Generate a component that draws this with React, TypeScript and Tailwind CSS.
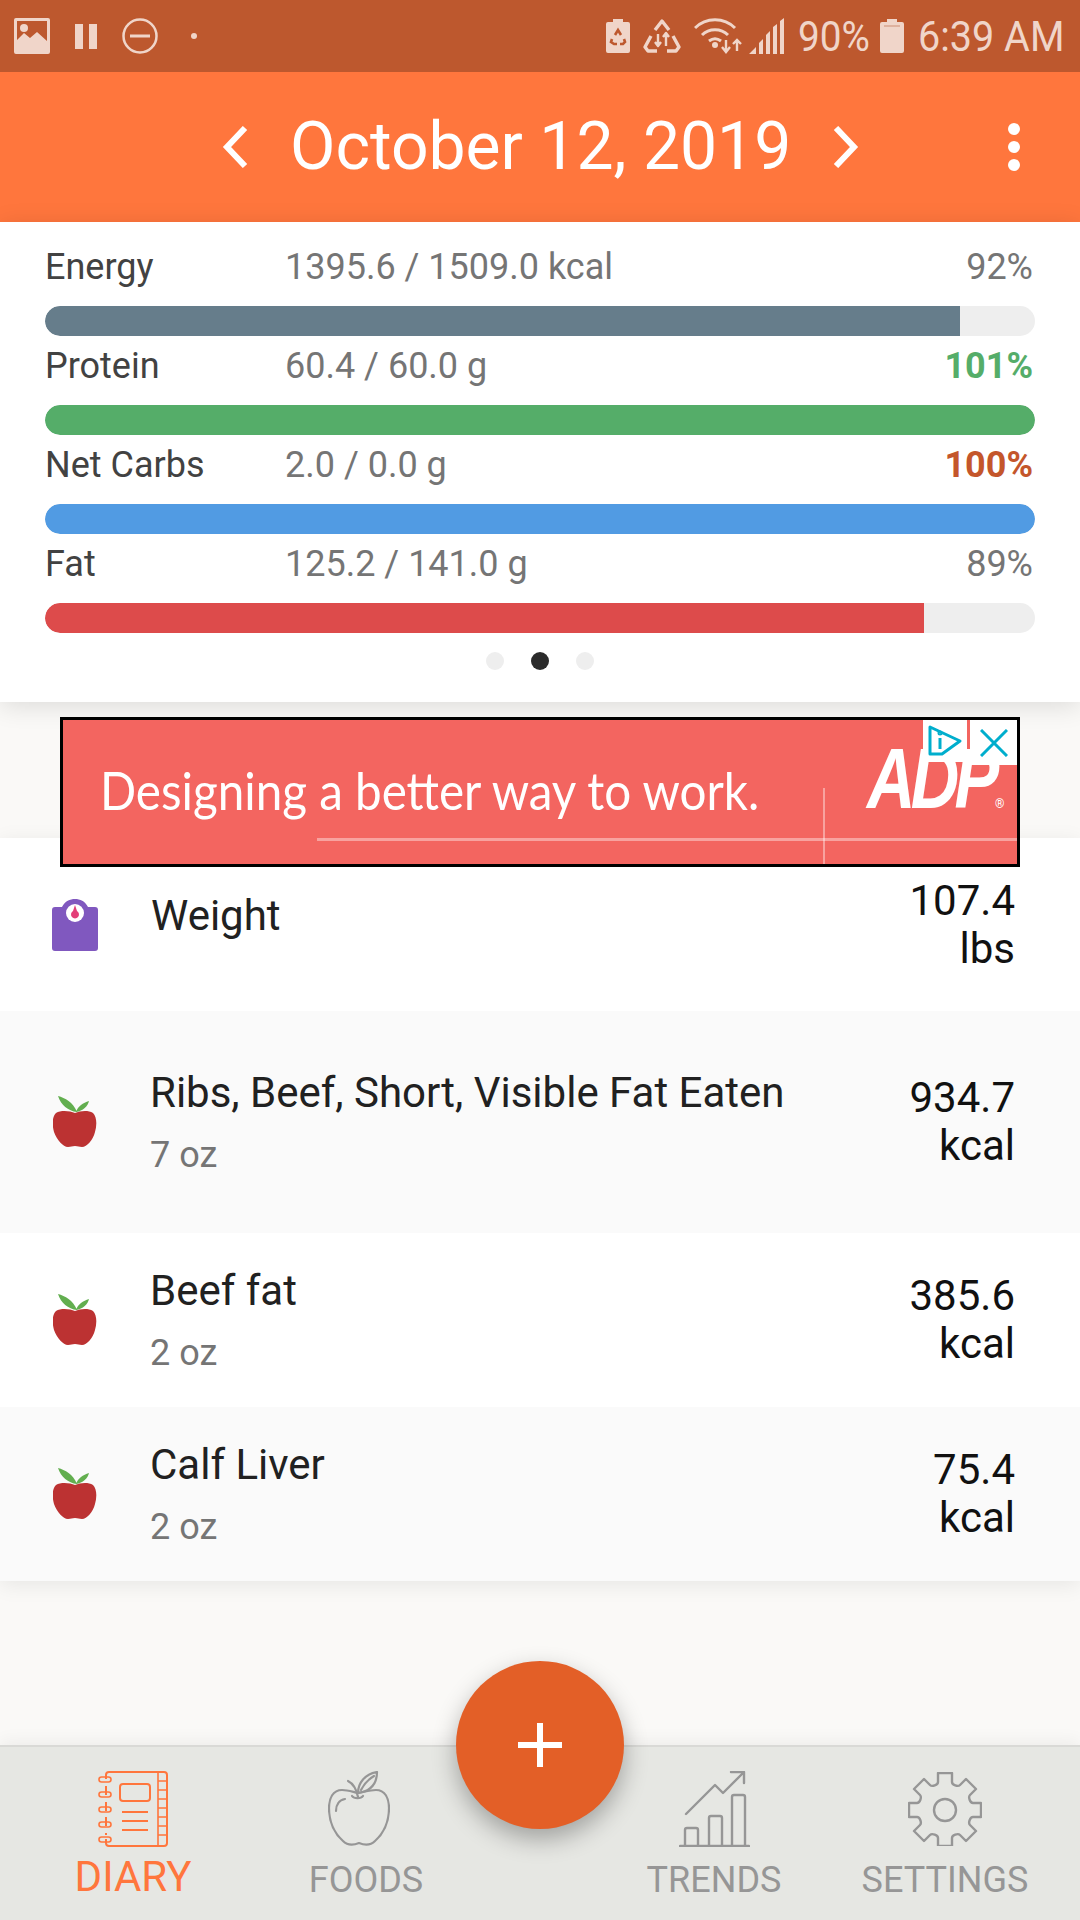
const macros = [
  { name: 'Energy', value: '1395.6 / 1509.0 kcal', pct: '92%', pctClass: 'text-[#757575]', fill: 'bg-[#667d8b] rounded-l-full', width: '92.4%' },
  { name: 'Protein', value: '60.4 / 60.0 g', pct: '101%', pctClass: 'text-[#55ad69] font-bold', fill: 'bg-[#55ad69] rounded-full', width: '100%' },
  { name: 'Net Carbs', value: '2.0 / 0.0 g', pct: '100%', pctClass: 'text-[#c4562b] font-bold', fill: 'bg-[#519be3] rounded-full', width: '100%' },
  { name: 'Fat', value: '125.2 / 141.0 g', pct: '89%', pctClass: 'text-[#757575]', fill: 'bg-[#dd4b4b] rounded-l-full', width: '88.8%' },
]

const foods = [
  { name: 'Ribs, Beef, Short, Visible Fat Eaten', amount: '7 oz', value: '934.7', rowClass: 'h-[222px] bg-[#fafafa]' },
  { name: 'Beef fat', amount: '2 oz', value: '385.6', rowClass: 'h-[174px] bg-white' },
  { name: 'Calf Liver', amount: '2 oz', value: '75.4', rowClass: 'h-[174px] bg-[#fafafa]' },
]

function StatusLeft() {
  return (
    <div className="flex items-center text-[#f0d5c9]">
      <svg width="36" height="36" viewBox="0 0 36 36" className="ml-[14px]">
        <path fill="currentColor" fillRule="evenodd" d="M2 0h32a2 2 0 0 1 2 2v32a2 2 0 0 1-2 2H2a2 2 0 0 1-2-2V2a2 2 0 0 1 2-2Zm1 3v19l7-7 6 5 7-6 10 9V3Z" />
        <circle cx="10" cy="10" r="4" fill="currentColor" />
      </svg>
      <div className="ml-[25px] flex h-[25px] gap-[6px]">
        <div className="w-[8px] bg-current" />
        <div className="w-[8px] bg-current" />
      </div>
      <svg width="36" height="36" viewBox="0 0 36 36" className="ml-[25px]" fill="none" stroke="currentColor" strokeWidth="2.5">
        <circle cx="18" cy="18" r="16.5" />
        <path d="M8 18h20" strokeWidth="3" />
      </svg>
      <div className="ml-[33px] h-[6px] w-[6px] rounded-full bg-current" />
    </div>
  )
}

function StatusRight() {
  return (
    <div className="flex items-center text-[#f0d5c9]">
      <svg width="24" height="34" viewBox="0 0 24 34">
        <path fill="currentColor" d="M7 0h10v3h5a2 2 0 0 1 2 2v27a2 2 0 0 1-2 2H2a2 2 0 0 1-2-2V5a2 2 0 0 1 2-2h5Z" />
        <path fill="none" stroke="#bd582e" strokeWidth="2.6" d="M9 16l3-5 3 5M6 20l-1 3 3 2h3M18 20l1 3-2 2h-3" />
      </svg>
      <svg width="38" height="34" viewBox="0 0 38 34" className="ml-[13px]" fill="none" stroke="currentColor" strokeWidth="3.4" strokeLinejoin="round">
        <path d="M12 11l7-9 7 9M8 17l-6 11 3 4h9M30 17l6 11-3 4h-9" />
        <path d="M15 15v12M12 23l3 4 3-4M23 27V14M20 18l3-4 3 4" strokeWidth="2.4" />
      </svg>
      <svg width="48" height="36" viewBox="0 0 48 36" className="ml-[13px]" fill="none" stroke="currentColor" strokeWidth="3">
        <path d="M1 10C12 -1 30 -1 41 10M8 17c7-7 19-7 26 0M15 23c4-3 8-3 12 0" />
        <circle cx="21" cy="27" r="3" fill="currentColor" stroke="none" />
        <path d="M32 22v11M28 29l4 5 4-5M43 33V22M39 26l4-4 4 4" strokeWidth="2.4" />
      </svg>
      <svg width="35" height="36" viewBox="0 0 35 36" className="ml-[7px]" fill="currentColor">
        <path d="M0 36l7-7v7ZM10 25l4-4v15h-4ZM17 17l4-4v23h-4ZM24 9l4-3v30h-4ZM31 3l4-3v36h-4Z" />
      </svg>
      <span className="ml-[14px] inline-block w-[69px] origin-left scale-x-[0.9] text-[43px] leading-[36px] whitespace-nowrap">90%</span>
      <svg width="24" height="34" viewBox="0 0 24 34" className="ml-[13px]">
        <path fill="currentColor" d="M7 0h10v3h5a2 2 0 0 1 2 2v27a2 2 0 0 1-2 2H2a2 2 0 0 1-2-2V5a2 2 0 0 1 2-2h5Z" />
        <path stroke="#d9a58f" strokeWidth="1.5" d="M4 7h16" />
      </svg>
      <span className="ml-[14px] mr-[19px] inline-block w-[143px] origin-left scale-x-[0.92] text-[43px] leading-[36px] whitespace-nowrap">6:39 AM</span>
    </div>
  )
}

function AppleSolid() {
  return (
    <svg width="44" height="52" viewBox="0 0 44 52">
      <path fill="#bc3232" d="M22 17c5-2 13-3 18 0 4 4 4 12 2 19-2 8-8 15-13 15-3 0-4-1-7-1s-4 1-7 1c-5 0-11-7-14-15C-1 29-1 21 3 17c5-3 14-2 19 0Z" />
      <path fill="#62ae4f" d="M5 0c7 2 15 6 19 16C15 15 8 9 5 0ZM36 5c-1 5-6 10-13 11 2-6 7-9 13-11Z" />
    </svg>
  )
}

function WeightIcon() {
  return (
    <svg width="46" height="52" viewBox="0 0 46 52">
      <path fill="#8058bf" d="M10 8C13 2 18 0 23 0s10 2 13 8h7a3 3 0 0 1 3 3v38a3 3 0 0 1-3 3H3a3 3 0 0 1-3-3V11a3 3 0 0 1 3-3Z" />
      <circle cx="23" cy="14" r="9" fill="#fff" />
      <path fill="#e33f78" d="M23 6l2 6a4 4 0 1 1-4 0Z" />
    </svg>
  )
}

function DiaryIcon() {
  return (
    <svg width="71" height="76" viewBox="0 0 71 76" fill="none" stroke="#ff763d" strokeWidth="1.6">
      <path d="M8 8V4a3 3 0 0 1 3-3h55a3 3 0 0 1 3 3v68a3 3 0 0 1-3 3H11a3 3 0 0 1-3-3v-4M8 15v9M8 31v9M8 46v9M8 62v2" strokeWidth="2" />
      <path d="M60 1v74M60 10h9M60 19h9M60 28h9M60 37h9M60 46h9M60 55h9M60 64h9" />
      <rect x="1" y="6" width="12" height="5" rx="2.5" />
      <rect x="1" y="21" width="12" height="5" rx="2.5" />
      <rect x="1" y="36" width="12" height="5" rx="2.5" />
      <rect x="1" y="51" width="12" height="5" rx="2.5" />
      <rect x="1" y="66" width="12" height="5" rx="2.5" />
      <rect x="22" y="13" width="30" height="17" rx="3" strokeWidth="2" />
      <path d="M24 41h26M24 50h26M24 59h26" strokeWidth="2" />
    </svg>
  )
}

function AppleIcon() {
  return (
    <svg width="62" height="76" viewBox="0 0 62 76" fill="none" stroke="#969696" strokeWidth="2.2" strokeLinecap="round" strokeLinejoin="round">
      <path d="M30 22c6-1 12-3 18-3 9 0 13 8 13 18 0 11-4 24-14 33-5 5-11 4-16 2-5 2-11 3-16-2C5 61 1 48 1 37c0-10 4-18 13-18 6 0 11 2 16 3Z" />
      <path d="M8 40c0-6 3-11 9-12M20 10c4 2 8 6 10 16M24 25c2 3 9 3 11 0" />
      <path d="M30 22c0-10 7-19 19-21 0 11-6 19-19 21ZM33 19c3-6 8-11 13-14" />
    </svg>
  )
}

function TrendsIcon() {
  return (
    <svg width="71" height="76" viewBox="0 0 71 76" fill="none" stroke="#969696" strokeWidth="2.4" strokeLinecap="round" strokeLinejoin="round">
      <path d="M1 75h69M6 75V59a2 2 0 0 1 2-2h9a2 2 0 0 1 2 2v16M30 75V47a2 2 0 0 1 2-2h9a2 2 0 0 1 2 2v28M53 75V26a2 2 0 0 1 2-2h9a2 2 0 0 1 2 2v49" />
      <path d="M7 43L36 14l8 8L64 2M52 1h13v11" />
    </svg>
  )
}

function SettingsIcon() {
  return (
    <svg width="74" height="74" viewBox="0 0 74 74" fill="none" stroke="#969696" strokeWidth="2.4" strokeLinejoin="round">
      <path d="M30 1h14v9c0 3 6 5 8 3l6-6 10 10-6 6c-2 2 0 8 3 8h8v14h-8c-3 0-5 6-3 8l6 6-10 10-6-6c-2-2-8 0-8 3v8H30v-8c0-3-6-5-8-3l-6 6L6 59l6-6c2-2 0-8-3-8H1V31h8c3 0 5-6 3-8l-6-6L16 7l6 6c2 2 8 0 8-3Z" />
      <circle cx="37" cy="38" r="11" />
    </svg>
  )
}

const navItems = [
  { label: 'DIARY', icon: <DiaryIcon />, boxClass: 'w-[266px]', iconClass: '', textClass: 'mt-[9px] text-[42px] leading-[42px] text-[#ff763d]' },
  { label: 'FOODS', icon: <AppleIcon />, boxClass: 'w-[200px]', iconClass: 'mr-[14px]', textClass: 'mt-[14px] text-[36px] leading-[38px] text-[#969696]' },
  { label: 'TRENDS', icon: <TrendsIcon />, boxClass: 'ml-[140px] w-[216px]', iconClass: '', textClass: 'mt-[14px] text-[36px] leading-[38px] text-[#969696]' },
  { label: 'SETTINGS', icon: <SettingsIcon />, boxClass: 'w-[246px]', iconClass: '', textClass: 'mt-[14px] text-[36px] leading-[38px] text-[#969696]' },
]

export default function App() {
  return (
    <div className="relative flex h-[1920px] w-[1080px] flex-col overflow-hidden bg-[#faf9f7] font-[Roboto,sans-serif]">
      <div className="flex h-[72px] shrink-0 items-center justify-between bg-[#bd582e]">
        <StatusLeft />
        <StatusRight />
      </div>

      <div className="flex h-[150px] shrink-0 items-center bg-[#ff763d] pl-[222px] text-white">
        <svg width="26" height="42" viewBox="0 0 26 42" fill="none" stroke="currentColor" strokeWidth="6">
          <path d="M23 2L5 21l18 19" />
        </svg>
        <span className="ml-[42px] w-[499px] text-[66px] leading-none whitespace-nowrap">October 12, 2019</span>
        <svg width="26" height="42" viewBox="0 0 26 42" className="ml-[44px]" fill="none" stroke="currentColor" strokeWidth="6">
          <path d="M3 2l18 19L3 40" />
        </svg>
        <div className="ml-[149px] flex flex-col gap-[6px]">
          <div className="h-[12px] w-[12px] rounded-full bg-white" />
          <div className="h-[12px] w-[12px] rounded-full bg-white" />
          <div className="h-[12px] w-[12px] rounded-full bg-white" />
        </div>
      </div>

      <div className="z-10 h-[480px] shrink-0 bg-white px-[45px] pt-[20px] shadow-[0_4px_24px_rgba(0,0,0,0.12)]">
        {macros.map((m) => (
          <div key={m.name} className="h-[99px]">
            <div className="flex h-[50px] items-center text-[36px] leading-[40px]">
              <span className="w-[240px] text-[#424242]">{m.name}</span>
              <span className="flex-1 text-[#757575]">{m.value}</span>
              <span className={`mr-[2px] ${m.pctClass}`}>{m.pct}</span>
            </div>
            <div className="mt-[14px] h-[30px] overflow-hidden rounded-full bg-[#eeeeee]">
              <div className={`h-full ${m.fill}`} style={{ width: m.width }} />
            </div>
          </div>
        ))}
        <div className="mt-[14px] flex justify-center gap-[27px]">
          <div className="h-[18px] w-[18px] rounded-full bg-[#eeeeee]" />
          <div className="h-[18px] w-[18px] rounded-full bg-[#2b2b2b]" />
          <div className="h-[18px] w-[18px] rounded-full bg-[#eeeeee]" />
        </div>
      </div>

      <div className="relative z-20 mx-[60px] mt-[15px] mb-[-29px] h-[150px] shrink-0 overflow-hidden border-[3px] border-black bg-[#f36560]">
        <div className="flex h-full items-center pb-[4px] pl-[37px]">
          <span className="inline-block origin-left scale-x-[0.915] text-[52px] leading-none whitespace-nowrap text-white font-[Lato,sans-serif]">Designing a better way to work.</span>
        </div>
        <div className="absolute top-[118px] right-0 left-[254px] h-[3px] bg-white/40" />
        <div className="absolute top-[68px] bottom-0 left-[760px] w-[2px] bg-white/40" />
        <div className="absolute top-[27px] left-[804px] origin-left scale-x-[0.78] text-[86px] leading-[62px] font-bold tracking-[-6px] text-white italic font-['Liberation_Sans',sans-serif]">ADP</div>
        <div className="absolute top-[78px] left-[932px] text-[12px] leading-none text-white">®</div>
        <div className="absolute top-0 right-0 flex">
          <div className="flex h-[42px] w-[44px] items-center justify-center bg-white">
            <svg width="34" height="32" viewBox="0 0 34 32" fill="none" stroke="#00aecd" strokeWidth="3" strokeLinejoin="round">
              <path d="M2 2l30 14-18 13H2Z" />
              <path d="M12 13v11" strokeWidth="3" />
              <circle cx="12" cy="8" r="1" />
            </svg>
          </div>
          <div className="w-[3px]" />
          <div className="flex h-[45px] w-[47px] items-center justify-center bg-white">
            <svg width="28" height="28" viewBox="0 0 28 28" stroke="#00aecd" strokeWidth="3" fill="none">
              <path d="M1 1l26 26M27 1L1 27" />
            </svg>
          </div>
        </div>
      </div>

      <div className="z-10 shrink-0 shadow-[0_4px_20px_rgba(0,0,0,0.08)]">
        <div className="flex h-[173px] items-center bg-white pr-[65px] pl-[52px]">
          <WeightIcon />
          <span className="ml-[53px] flex-1 pb-[18px] text-[42px] leading-[48px] text-[#212121]">Weight</span>
          <div className="text-right text-[42px] leading-[48px] text-[#111111]">
            <div>107.4</div>
            <div>lbs</div>
          </div>
        </div>
        {foods.map((f) => (
          <div key={f.name} className={`flex items-center pr-[65px] pl-[53px] ${f.rowClass}`}>
            <AppleSolid />
            <div className="ml-[53px] flex-1 pt-[3px]">
              <div className="text-[42px] leading-[48px] text-[#212121]">{f.name}</div>
              <div className="mt-[14px] text-[36px] leading-[48px] text-[#757575]">{f.amount}</div>
            </div>
            <div className="text-right text-[42px] leading-[48px] text-[#111111]">
              <div>{f.value}</div>
              <div>kcal</div>
            </div>
          </div>
        ))}
      </div>

      <div className="mt-auto flex h-[175px] shrink-0 items-start border-t-2 border-[#d9d9d6] bg-[#e6e7e3] pt-[24px] shadow-[0_-4px_16px_rgba(0,0,0,0.05)]">
        {navItems.map((n) => (
          <div key={n.label} className={`flex flex-col items-center ${n.boxClass}`}>
            <div className={`flex h-[76px] items-center ${n.iconClass}`}>{n.icon}</div>
            <span className={n.textClass}>{n.label}</span>
          </div>
        ))}
      </div>

      <button className="absolute top-[1661px] left-[456px] z-30 flex h-[168px] w-[168px] items-center justify-center rounded-full bg-[#e35f27] shadow-[0_10px_24px_rgba(0,0,0,0.3)]">
        <svg width="44" height="44" viewBox="0 0 44 44" fill="#fff">
          <path d="M19 0h6v19h19v6H25v19h-6V25H0v-6h19Z" />
        </svg>
      </button>
    </div>
  )
}
